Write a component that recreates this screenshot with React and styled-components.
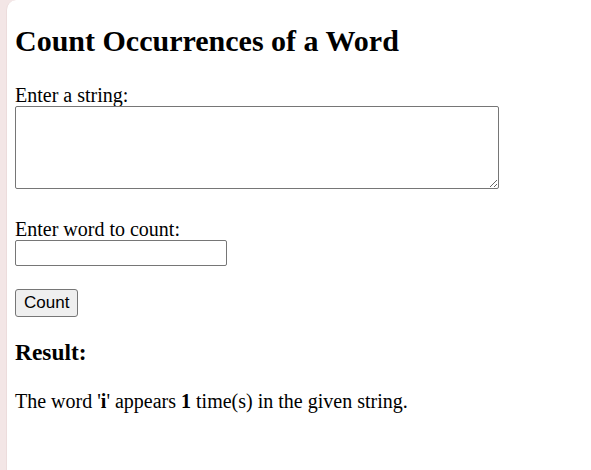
import React, { useState } from 'react'
import styled, { createGlobalStyle } from 'styled-components'

const GlobalStyle = createGlobalStyle`
  html, body {
    margin: 0;
    padding: 0;
    background: #f3e6e6;
  }
`;

const Page = styled.div`
  display: flex;
  min-height: 470px;
  padding-left: 6px;
  background: #f3e6e6;
`;

const Panel = styled.main`
  flex: 1;
  background: #ffffff;
  border-left: 1px solid #ecdcdc;
  border-top-left-radius: 10px;
  padding: 8px 8px;
  font-family: "Liberation Serif", "Times New Roman", serif;
  font-size: 20px;
  color: #000;
`;

const Title = styled.h2`
  margin: 16px 0 26px;
  font-size: 30px;
  line-height: 34px;
  font-weight: bold;
`;

const Form = styled.form`
  display: flex;
  flex-direction: column;
  align-items: flex-start;
`;

const Label = styled.label`
  display: block;
  line-height: 22px;
`;

const TextArea = styled.textarea`
  display: block;
  box-sizing: border-box;
  width: 484px;
  height: 83px;
  margin: 0 0 29px;
  border: 1px solid #767676;
  border-radius: 2px;
  font-family: "Liberation Mono", monospace;
  font-size: 16px;
`;

const TextInput = styled.input`
  display: block;
  box-sizing: border-box;
  width: 212px;
  height: 26px;
  margin: 0 0 23px;
  padding: 1px 3px;
  border: 1px solid #767676;
  border-radius: 2px;
  font-size: 16.67px;
  font-family: "Liberation Sans", Arial, sans-serif;
`;

const Button = styled.button`
  box-sizing: border-box;
  height: 28px;
  padding: 0 8px;
  border: 1px solid #767676;
  border-radius: 3px;
  background: #efefef;
  font-family: "Liberation Sans", Arial, sans-serif;
  font-size: 17px;
  color: #000;
`;

const ResultTitle = styled.h3`
  margin: 22px 0 0;
  font-size: 23.4px;
  line-height: 27px;
  font-weight: bold;
`;

const ResultText = styled.p`
  margin: 24px 0 0;
  line-height: 22px;
`;

export default function App() {
  const [text, setText] = useState('');
  const [word, setWord] = useState('');
  const [result, setResult] = useState({ word: 'i', count: 1 });

  const handleCount = (e) => {
    e.preventDefault();
    const target = word.trim().toLowerCase();
    const count = text
      .toLowerCase()
      .split(/\s+/)
      .filter((w) => w === target).length;
    setResult({ word: word.trim(), count });
  };

  return (
    <>
      <GlobalStyle />
      <Page>
        <Panel>
          <Title>Count Occurrences of a Word</Title>
          <Form onSubmit={handleCount}>
            <Label htmlFor="str">Enter a string:</Label>
            <TextArea id="str" value={text} onChange={(e) => setText(e.target.value)} />
            <Label htmlFor="word">Enter word to count:</Label>
            <TextInput id="word" value={word} onChange={(e) => setWord(e.target.value)} />
            <Button type="submit">Count</Button>
          </Form>
          <ResultTitle>Result:</ResultTitle>
          <ResultText>
            The word '<b>{result.word}</b>' appears <b>{result.count}</b> time(s) in the given string.
          </ResultText>
        </Panel>
      </Page>
    </>
  );
}
